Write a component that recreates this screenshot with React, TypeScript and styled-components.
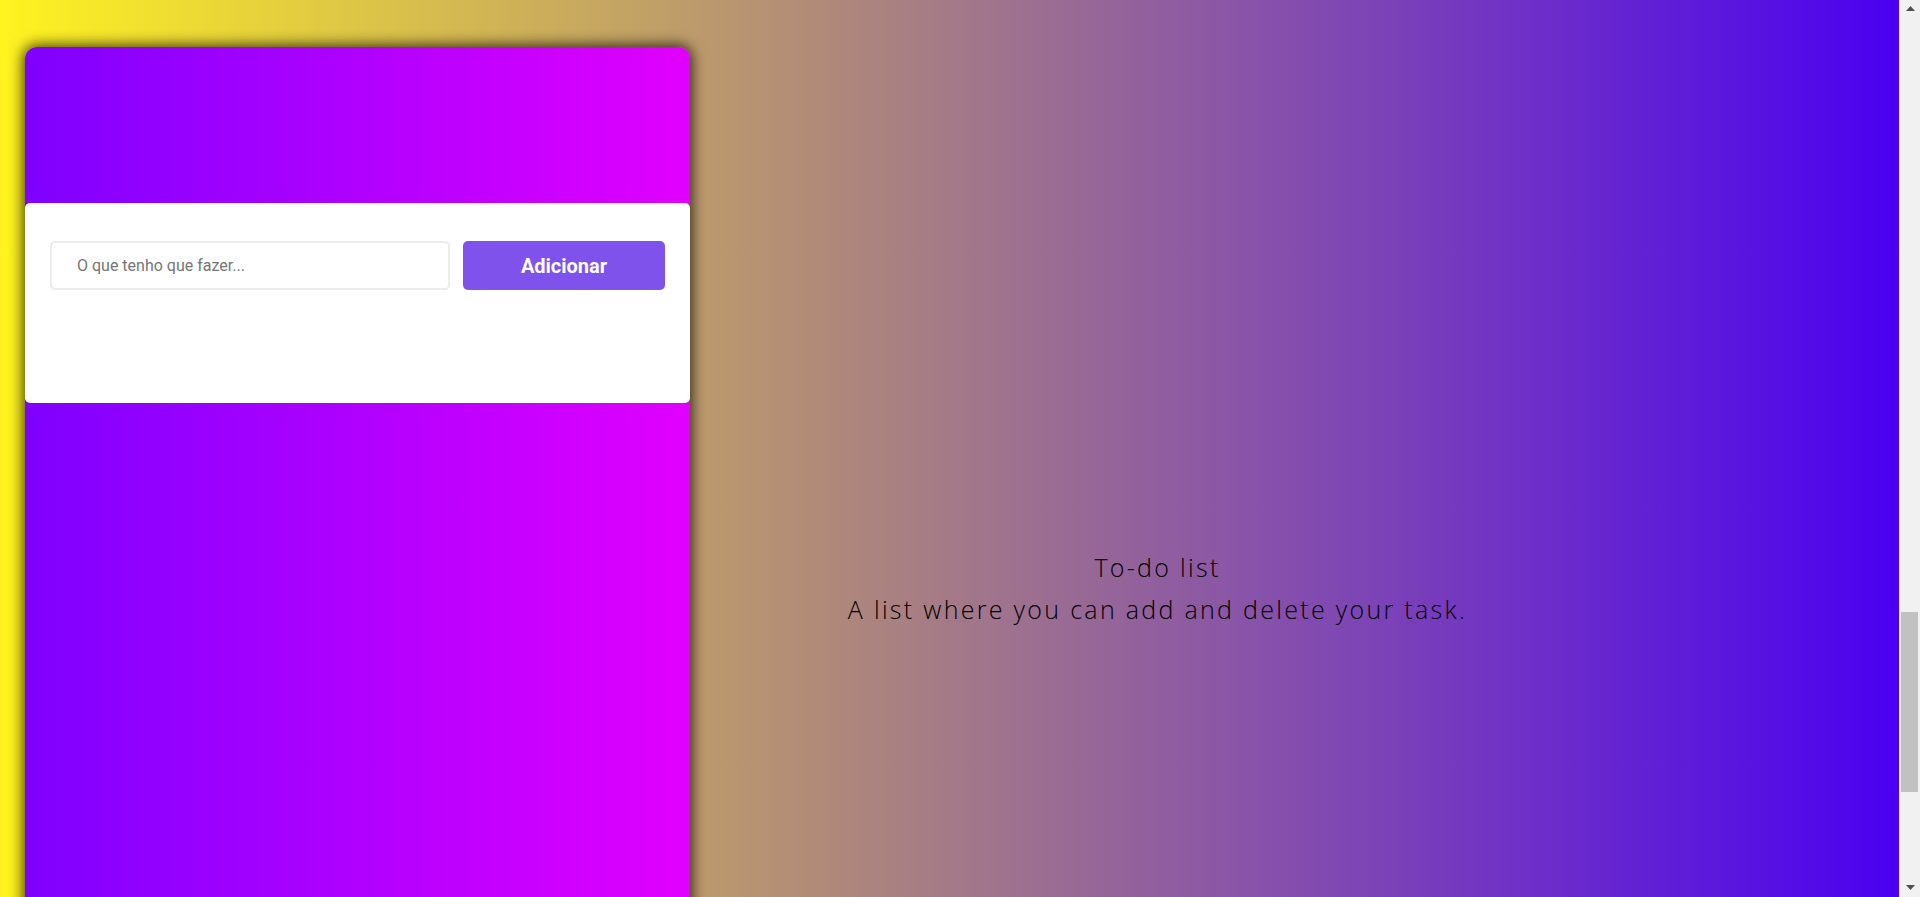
import React from "react";
import styled, { createGlobalStyle } from "styled-components";

const GlobalStyle = createGlobalStyle`
  body {
    margin: 0;
    font-family: "Roboto", "Liberation Sans", sans-serif;
  }
  * {
    box-sizing: border-box;
  }
`;

const Page = styled.div`
  display: flex;
  height: 100vh;
  overflow: hidden;
`;

const Main = styled.main`
  flex: 1;
  min-width: 0;
  background: linear-gradient(to right, #fff31f, #4a00f0);
  padding: 47px 0 0 25px;
`;

const Row = styled.div`
  display: flex;
`;

const Card = styled.section`
  flex: 0 0 665px;
  height: 1082px;
  border-radius: 12px;
  background: linear-gradient(to right, #7f00ff, #e100ff);
  box-shadow: 0 0 14px 2px rgba(0, 0, 0, 0.75);
  padding-top: 156px;
`;

const Panel = styled.div`
  height: 200px;
  background: #ffffff;
  border-radius: 5px;
  padding: 38px 25px 0 25px;
`;

const Form = styled.form`
  display: flex;
  gap: 13px;
  height: 49px;
`;

const TaskInput = styled.input`
  flex: 1;
  height: 100%;
  border: 2px solid #ececec;
  border-radius: 5px;
  padding: 0 0 0 25px;
  font-family: "Roboto", "Liberation Sans", sans-serif;
  font-size: 16px;
  color: #333;
  outline: none;
  &::placeholder {
    color: #757575;
  }
`;

const AddButton = styled.button`
  flex: 0 0 202px;
  height: 100%;
  border: none;
  border-radius: 5px;
  background: #8052ec;
  color: #ffffff;
  font-family: "Roboto", "Liberation Sans", sans-serif;
  font-weight: 700;
  font-size: 20px;
  cursor: pointer;
`;

const Info = styled.div`
  flex: 1;
  display: flex;
  flex-direction: column;
  justify-content: center;
  align-items: center;
  padding-right: 274px;
  text-align: center;
`;

const InfoLine = styled.p`
  margin: 0;
  font-family: "Open Sans", "Liberation Sans", sans-serif;
  font-weight: 300;
  font-size: 25px;
  letter-spacing: 2.3px;
  line-height: 42px;
  color: #000;
  white-space: nowrap;
`;

const ScrollTrack = styled.div`
  position: relative;
  flex: 0 0 21px;
  background: #f1f1f1;
  display: flex;
  flex-direction: column;
  justify-content: space-between;
  align-items: center;
  padding: 6px 0 7px 2px;
`;

const ScrollThumb = styled.div`
  position: absolute;
  top: 612px;
  left: 2px;
  width: 17px;
  height: 180px;
  background: #c1c1c1;
`;

const Arrow = ({ down }: { down?: boolean }) => (
  <svg width="9" height="5" viewBox="0 0 9 5" aria-hidden="true">
    <polygon points={down ? "0,0 9,0 4.5,5" : "4.5,0 9,5 0,5"} fill="#505050" />
  </svg>
);

export default function App() {
  return (
    <>
      <GlobalStyle />
      <Page>
        <Main>
          <Row>
            <Card>
              <Panel>
                <Form onSubmit={(e) => e.preventDefault()}>
                  <TaskInput type="text" placeholder="O que tenho que fazer..." />
                  <AddButton type="submit">Adicionar</AddButton>
                </Form>
              </Panel>
            </Card>
            <Info>
              <InfoLine>To-do list</InfoLine>
              <InfoLine>A list where you can add and delete your task.</InfoLine>
            </Info>
          </Row>
        </Main>
        <ScrollTrack>
          <Arrow />
          <ScrollThumb />
          <Arrow down />
        </ScrollTrack>
      </Page>
    </>
  );
}
